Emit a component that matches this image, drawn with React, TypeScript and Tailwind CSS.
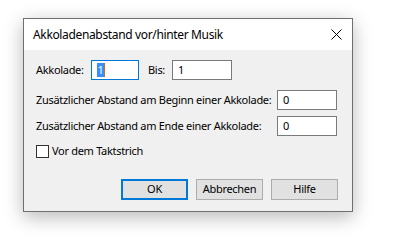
import React from 'react';

const font = { fontFamily: '"Noto Sans", "Segoe UI", sans-serif' };

function Field({ value, w, focused = false }: { value: string; w: string; focused?: boolean }) {
  return (
    <div
      className={`${w} h-[20px] bg-white border flex items-center pl-[5px] ${
        focused ? 'border-[#0078d7]' : 'border-[#7a7a7a]'
      }`}
    >
      {focused ? (
        <span className="flex items-center">
          <span className="bg-[#3390ff] text-white leading-[14px] px-[0.5px]">{value}</span>
          <span className="w-px h-[14px] bg-[#e06a00]" />
        </span>
      ) : (
        <span className="leading-[14px]">{value}</span>
      )}
    </div>
  );
}

function Btn({ label, primary = false }: { label: string; primary?: boolean }) {
  return (
    <div
      className={`w-[67px] h-[21px] bg-[#e1e1e1] flex items-center justify-center ${
        primary ? 'border-2 border-[#0078d7]' : 'border border-[#adadad]'
      }`}
    >
      {label}
    </div>
  );
}

export default function App() {
  return (
    <div
      className="w-[401px] h-[247px] bg-white pt-[18px] pl-[23px] text-[11px] tracking-[-0.3px] text-black whitespace-nowrap"
      style={font}
    >
      <div className="w-[330px] h-[194px] border border-[#6f6f6f] flex flex-col shadow-[0_5px_18px_rgba(0,0,0,0.28)]">
        <div className="h-[31px] bg-white flex items-center justify-between pl-[9px] pr-[10px]">
          <span className="text-[12px] tracking-[-0.35px]">Akkoladenabstand vor/hinter Musik</span>
          <svg width="11" height="11" viewBox="0 0 11 11" className="text-black">
            <path d="M0.5 0.5 L10.5 10.5 M10.5 0.5 L0.5 10.5" stroke="currentColor" strokeWidth="1" />
          </svg>
        </div>
        <div className="flex-1 bg-[#f0f0f0] pl-[12px] pt-[10px] flex flex-col">
          <div className="flex items-center">
            <span className="w-[55px]">Akkolade:</span>
            <Field value="1" w="w-[48px]" focused />
            <span className="ml-[9px] w-[24px]">Bis:</span>
            <Field value="1" w="w-[60px]" />
          </div>
          <div className="flex items-center mt-[10px]">
            <span className="w-[241px]">Zusätzlicher Abstand am Beginn einer Akkolade:</span>
            <Field value="0" w="w-[60px]" />
          </div>
          <div className="flex items-center mt-[6px]">
            <span className="w-[241px]">Zusätzlicher Abstand am Ende einer Akkolade:</span>
            <Field value="0" w="w-[60px]" />
          </div>
          <div className="flex items-center mt-[7px]">
            <span className="w-[13px] h-[13px] border border-[#333] bg-white" />
            <span className="ml-[3px]">Vor dem Taktstrich</span>
          </div>
          <div className="flex mt-[19px] pl-[85px] gap-[8px]">
            <Btn label="OK" primary />
            <Btn label="Abbrechen" />
            <Btn label="Hilfe" />
          </div>
        </div>
      </div>
    </div>
  );
}
